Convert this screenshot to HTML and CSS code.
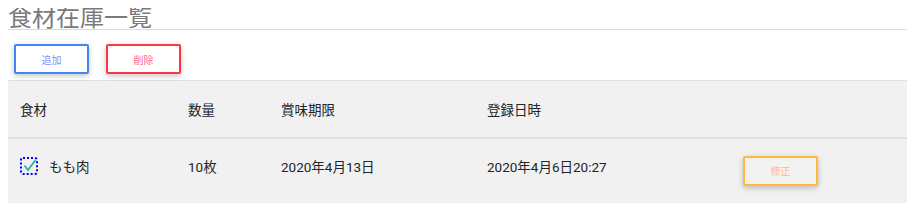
FILE: index.html
```html
<!DOCTYPE html>
<html lang="ja">
<head>
    <meta charset="UTF-8">
    <title>食材在庫一覧</title>
    <link rel="stylesheet" href="styles.css">
</head>
<body>
    <h1 class="title">食材在庫一覧</h1>
    <div class="actions">
        <button class="btn btn-add">追加</button>
        <button class="btn btn-delete">削除</button>
    </div>
    <table class="stock">
        <thead>
            <tr>
                <th class="col-name">食材</th>
                <th class="col-qty">数量</th>
                <th class="col-limit">賞味期限</th>
                <th class="col-date">登録日時</th>
                <th class="col-edit"></th>
            </tr>
        </thead>
        <tbody>
            <tr>
                <td>
                    <span class="item">
                        <svg class="check" width="19" height="19" viewBox="0 0 19 19">
                            <rect x="1" y="2" width="16" height="16" rx="2" fill="none" stroke="#0000ff" stroke-width="2" stroke-dasharray="2 2"/>
                            <path d="M4.5 9.5 L8 14 L15.5 4" fill="none" stroke="#26b5a3" stroke-width="1.8"/>
                        </svg>
                        もも肉
                    </span>
                </td>
                <td>10枚</td>
                <td>2020年4月13日</td>
                <td>2020年4月6日20:27</td>
                <td class="cell-edit"><button class="btn btn-edit">修正</button></td>
            </tr>
        </tbody>
    </table>
</body>
</html>
```

FILE: styles.css
```css
body {
    margin: 8px 0 0 8px;
    font-family: Roboto, "Noto Sans CJK JP", sans-serif;
    color: #212529;
    background: #fff;
}

.title {
    margin: 0;
    font-size: 24px;
    font-weight: 400;
    line-height: 21px;
    color: #7a7a7a;
    border-bottom: 1px solid #dcdcdc;
}

.actions {
    display: flex;
    gap: 17px;
    padding: 14px 0 6px 6px;
}

.btn {
    width: 75px;
    height: 30px;
    padding: 0;
    background: #fff;
    border: 2px solid;
    border-radius: 2px;
    font-family: inherit;
    font-size: 10px;
    box-shadow: 0 2px 5px rgba(0, 0, 0, 0.16), 0 2px 8px rgba(0, 0, 0, 0.08);
    cursor: pointer;
}

.btn-add {
    border-color: #4285f4;
    color: #8c8cf0;
}

.btn-delete {
    border-color: #ff3547;
    color: #ff6a84;
}

.btn-edit {
    border-color: #ffbb33;
    color: #ffb98a;
    background: #f2f2f2;
}

.stock {
    width: 100%;
    border-collapse: collapse;
    background: #f1f1f1;
    font-size: 13.5px;
    table-layout: fixed;
}

.stock th,
.stock td {
    padding: 0 12px;
    text-align: left;
    font-weight: 400;
}

.stock td {
    padding-bottom: 10px;
}

.stock td.cell-edit {
    padding-bottom: 0;
}

.stock thead tr {
    height: 57px;
    border-top: 1px solid #dee2e6;
    border-bottom: 2px solid #dee2e6;
}

.stock tbody tr {
    height: 65px;
}

.col-name { width: 144px; }
.col-qty { width: 69px; }
.col-limit { width: 182px; }
.col-date { width: 232px; }

.item {
    display: flex;
    align-items: center;
    gap: 10px;
}

.check {
    display: block;
}
```
